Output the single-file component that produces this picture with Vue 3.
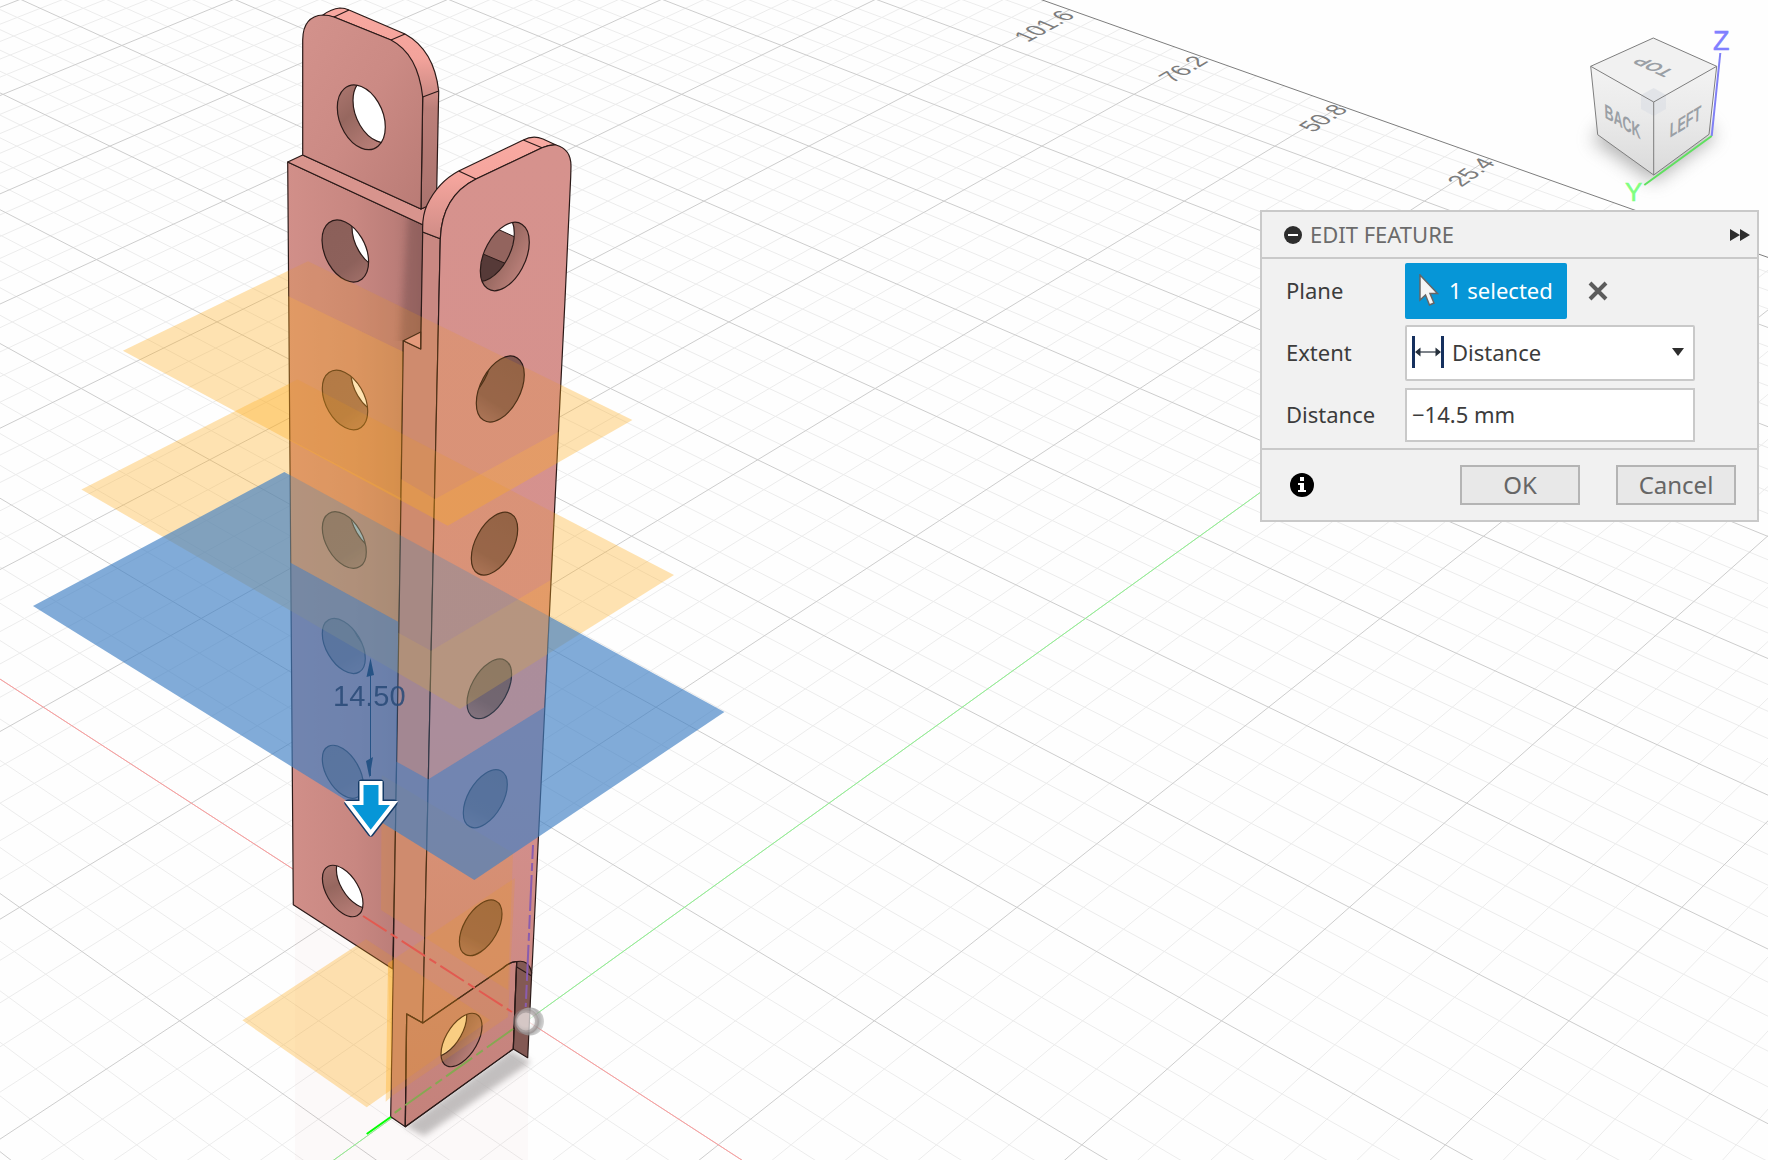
<template>
  <main class="workspace">
    <svg class="viewport" viewBox="0 0 1768 1160" preserveAspectRatio="xMinYMin slice" aria-label="Model viewport">
      <defs>
        <linearGradient id="plate" x1="0" x2="1" y1="0" y2="0">
          <stop offset="0" stop-color="#d18f89" />
          <stop offset="0.5" stop-color="#c88781" />
          <stop offset="0.78" stop-color="#bc7e79" />
          <stop offset="1" stop-color="#a66f6b" />
        </linearGradient>
        <linearGradient id="tab" x1="0" x2="1" y1="0" y2="1">
          <stop offset="0" stop-color="#d3928c" />
          <stop offset="0.5" stop-color="#cb8a84" />
          <stop offset="1" stop-color="#b97b75" />
        </linearGradient>
        <linearGradient id="front" x1="0" x2="0" y1="0" y2="1">
          <stop offset="0" stop-color="#d6928d" />
          <stop offset="0.6" stop-color="#d5918e" />
          <stop offset="1" stop-color="#c9867f" />
        </linearGradient>
        <linearGradient id="rim" x1="0" x2="0" y1="0" y2="1">
          <stop offset="0" stop-color="#f9aaa2" />
          <stop offset="0.4" stop-color="#f5a59d" />
          <stop offset="1" stop-color="#cf8c86" />
        </linearGradient>
        <linearGradient id="tabSide" x1="0" x2="0" y1="0" y2="1">
          <stop offset="0" stop-color="#f8a8a0" />
          <stop offset="0.25" stop-color="#f3a39b" />
          <stop offset="0.42" stop-color="#cf8c86" />
          <stop offset="0.5" stop-color="#bb7f79" />
          <stop offset="1" stop-color="#ab736e" />
        </linearGradient>
        <linearGradient id="deep" x1="0" x2="1" y1="0" y2="1">
          <stop offset="0" stop-color="#8b5f59" />
          <stop offset="0.65" stop-color="#8d615b" />
          <stop offset="1" stop-color="#ab7770" />
        </linearGradient>
        <linearGradient id="deepRight" x1="1" x2="0" y1="0" y2="1">
          <stop offset="0" stop-color="#80564f" />
          <stop offset="0.65" stop-color="#865b54" />
          <stop offset="1" stop-color="#ad7871" />
        </linearGradient>
        <linearGradient id="shallow" x1="0" x2="1" y1="0" y2="1">
          <stop offset="0" stop-color="#b17a73" />
          <stop offset="0.4" stop-color="#96675f" />
          <stop offset="1" stop-color="#c48680" />
        </linearGradient>
        <linearGradient id="cubeSide" x1="0" x2="0" y1="0" y2="1">
          <stop offset="0" stop-color="#f3f3f3" />
          <stop offset="0.5" stop-color="#e9e9e9" />
          <stop offset="1" stop-color="#dadada" />
        </linearGradient>
        <radialGradient id="ball" cx="0.35" cy="0.45" r="0.65">
          <stop offset="0.35" stop-color="#fff" stop-opacity="0.55" />
          <stop offset="0.75" stop-color="#999" stop-opacity="0.75" />
          <stop offset="1" stop-color="#aaa" stop-opacity="0.5" />
        </radialGradient>
        <filter id="soft" x="-30%" y="-30%" width="160%" height="160%">
          <feGaussianBlur stdDeviation="3" />
        </filter>
        <filter id="softer" x="-50%" y="-50%" width="200%" height="200%">
          <feGaussianBlur stdDeviation="9" />
        </filter>
        <clipPath id="plateClip">
          <path d="M287.7 162L423.3 225L420.7 332L403.3 341L288 341Z" />
        </clipPath>
        <clipPath v-for="(hole, i) in holes" :id="`hole${i}`" :key="`hc${i}`">
          <circle r="1" :transform="hole.matrix" />
        </clipPath>
        <clipPath id="openClip">
          <circle r="1" :transform="holes[7].openMatrix" />
        </clipPath>
        <template v-for="(plane, i) in planes" :key="`pc${i}`">
          <clipPath :id="`behind${i}`">
            <path :d="plane.cut" />
          </clipPath>
          <clipPath :id="`ahead${i}`">
            <path :d="`M0 0H1768V1160H0Z ${plane.cut}`" clip-rule="evenodd" />
          </clipPath>
        </template>
      </defs>

      <!-- ground grid -->
      <g>
        <path class="grid-minor" :d="minorGrid" />
        <path class="grid-major" :d="majorGrid" />
        <path class="grid-border" :d="borderLine" />
        <path class="axis-red" :d="redAxis" />
        <path class="axis-green" :d="greenAxis" />
        <text
          v-for="label in gridLabels"
          :key="label.text"
          class="grid-label"
          y="8"
          :transform="`matrix(${label.dx} ${label.dy} 1 0.42 ${label.x} ${label.y})`"
        >{{ label.text }}</text>
      </g>

      <!-- reflection and contact shadow -->
      <path class="reflection" d="M295 905L393 969V1117L405 1127L528 1058V1160H295Z" />
      <path class="shadow" d="M511 1050L531 1062L424 1136L405 1126Z" filter="url(#soft)" />

      <!-- bracket body -->
      <g class="edges">
        <path fill="url(#plate)" d="M287.7 162L423.3 225L420.7 349L403.3 341L400 560L395.3 840L392.7 969L293.3 904.7L290.7 560Z" />
        <g clip-path="url(#plateClip)">
          <path class="crease" d="M430 215L408 215L400 345L430 348Z" filter="url(#soft)" />
        </g>
        <path fill="#d8948d" d="M287.7 162L302.7 155L421 209L428.5 205.5L423.3 225Z" />
        <path fill="url(#tabSide)" d="M323 15Q331 9 340 8Q345 8 349 10L405 34Q434 50 438.7 91L436.7 190L428 206L421 209L422.7 97L391 40L334 17Z" />
        <path fill="url(#tab)" d="M302.7 155V40Q303 16 323 15Q329 15 334 17L391 40Q418 54 422.7 97L421 209Z" />
        <path class="line" d="M334 17L349 10M391 40L405 34M422.7 97L438.7 91" />

        <path fill="#c98882" d="M422.7 232L440.3 238.7L434 520L428.3 780L422.7 1023L406.7 1014L405.3 1126.7L390.7 1116.7L395.3 840L400 560L403.3 340.7L420.7 349Z" />
        <path fill="#e29a93" d="M403.3 340.7L420.7 332V349Z" />
        <path fill="url(#rim)" d="M422.7 232Q422 216 427 205Q438 182 458.7 171L523.3 140Q533 135 543 139L556 145Q550 144.5 542 147.7L476 179Q442 196 440.3 238.7Z" />
        <path fill="url(#front)" d="M440.3 238.7Q442 196 476 179L542 147.7Q550 144.5 556 145Q571 149 571 166L570.7 177L565 300L554.7 507L538.3 840L532.3 963L531.7 973L516.7 962L513.3 1049L405.3 1126.7L406.7 1014L422.7 1023L428.3 780L434 520Z" />
        <path class="line" d="M458.7 171L476 179M523.3 140L542 147.7" />
        <path fill="#835954" d="M516.7 961.7Q529 959 531.7 973L527.7 1057.7L513.3 1049Z" />
        <path class="line" d="M422.7 1023L503 968Q511 961 516.7 961.7M516.7 967L531.7 976" />
        <path class="lower" d="M406.7 1014L422.7 1023L503 968Q511 961 516.7 961.7L513.3 1049L405.3 1126.7Z" />
      </g>

      <!-- drilled holes -->
      <g v-for="(hole, i) in holes" :key="i">
        <circle r="1" :transform="hole.matrix" :fill="`url(#${hole.shade})`" />
        <g v-if="hole.open" :clip-path="`url(#hole${i})`">
          <circle r="1" :transform="hole.openMatrix" :fill="hole.fill" />
          <g v-if="hole.nested" clip-path="url(#openClip)">
            <path class="nested-mid" d="M492 226.5L516 237.5V272L470 249V226Z" />
            <path class="nested-low" d="M470 248.5L508 264.5V292H470Z" />
          </g>
          <circle class="hole-edge" r="1" :transform="hole.openMatrix" fill="none" />
        </g>
        <circle class="hole-edge" r="1" :transform="hole.matrix" fill="none" />
      </g>

      <!-- construction planes: light tint where the body is in front of them -->
      <path class="plane orange faint" d="M381.7 775L513 853L508 990L381 910Z" />
      <path class="plane orange faint" d="M388 963L515 878L508 1017L392 1096Z" />
      <path class="plane orange" d="M388 963L393 960L391 1097L385.7 1101.7Z" />
      <g v-for="(plane, i) in planes" :key="`p${i}`">
        <path :class="['plane', plane.kind, 'faint']" :d="plane.shape" :clip-path="`url(#behind${i})`" />
        <path :class="['plane', plane.kind]" :d="plane.shape" :clip-path="`url(#ahead${i})`" />
      </g>

      <!-- axes seen through the body -->
      <path class="hidden-red" d="M363 916L512 1012" />
      <path class="hidden-blue" d="M533 845L525.7 1007" />
      <path class="hidden-green" d="M513 1029L393 1114" />
      <path class="near-green" d="M390.7 1117L366.7 1134" />
      <circle cx="530" cy="1021.5" r="14" fill="url(#ball)" />
      <circle class="ball-ring" cx="526" cy="1021.5" r="11" />

      <!-- dimension manipulator -->
      <g class="dimension">
        <path class="dim-line" d="M370.5 660V776" />
        <path d="M370.5 658L366.5 677L374 675ZM369.5 778L366 761L373 757Z" />
        <text x="333" y="706">14.50</text>
      </g>
      <path class="arrow-outer" d="M361.5 783H380.5V803H394L370.7 833L348 803H361.5Z" />
      <path class="arrow-inner" d="M361.5 783H380.5V803H394L370.7 833L348 803H361.5Z" />

      <!-- view cube -->
      <g>
        <path class="cube-shadow" d="M1592 140L1654 182L1716 136L1700 120H1610Z" filter="url(#softer)" />
        <path class="cube-face" fill="#f1f1f1" d="M1653.3 38L1590.7 66.3L1653.7 102L1716.7 66.3Z" />
        <path class="cube-face" fill="url(#cubeSide)" d="M1590.7 66.3L1653.7 102V175L1597.7 134.7Z" />
        <path class="cube-face" fill="url(#cubeSide)" d="M1716.7 66.3L1653.7 102V175L1709 134.3Z" />
        <path class="cube-corner" d="M1653.7 88L1666 95V109L1653.7 116L1641 109V95Z" />
        <path class="cube-edge" d="M1653.3 38L1590.7 66.3L1597.7 134.7L1653.7 175L1709 134.3L1716.7 66.3ZM1590.7 66.3L1653.7 102L1716.7 66.3M1653.7 102V175" />
        <text class="cube-text" y="7" transform="matrix(-0.84 -0.38 0.85 -0.46 1653 67)">TOP</text>
        <text class="cube-text" y="7" transform="matrix(0.66 0.4 0.04 1.08 1622.500 121)">BACK</text>
        <text class="cube-text" y="7" transform="matrix(0.66 -0.4 -0.04 1.08 1685.500 121)">LEFT</text>
        <path class="cube-z" d="M1720.3 53L1711.7 136" />
        <path class="cube-y" d="M1711.7 136L1644.3 185" />
        <text class="axis-name z" x="1713" y="50">Z</text>
        <text class="axis-name y" x="1625" y="201">Y</text>
      </g>
    </svg>

    <form class="panel" @submit.prevent>
      <header class="panel-header">
        <button type="button" class="plain" aria-label="Collapse">
          <svg width="18" height="18" viewBox="0 0 18 18">
            <circle cx="9" cy="9" r="9" fill="#2d2d2d" />
            <path d="M4 9H14" stroke="#fff" stroke-width="2" />
          </svg>
        </button>
        <h1>EDIT FEATURE</h1>
        <button type="button" class="plain" aria-label="Expand">
          <svg width="20" height="12" viewBox="0 0 20 12">
            <path d="M0 0L10 6L0 12ZM10 0L20 6L10 12Z" fill="#2d2d2d" />
          </svg>
        </button>
      </header>

      <div class="panel-body">
        <div class="row">
          <label for="plane">Plane</label>
          <button id="plane" type="button" class="picker">
            <svg width="20" height="32" viewBox="0 0 20 32">
              <path d="M1 1V26L6.500 21L10.500 31L15 29L11 19.500H18.500Z" fill="#f5f5f5" stroke="#666" stroke-width="1.500" />
            </svg>
            <span>1 selected</span>
          </button>
          <button type="button" class="plain clear" aria-label="Clear selection">
            <svg width="20" height="20" viewBox="0 0 20 20">
              <path d="M2 2L18 18M18 2L2 18" stroke="#5c5c5c" stroke-width="4" />
            </svg>
          </button>
        </div>
        <div class="row">
          <label for="extent">Extent</label>
          <div class="select-wrap">
            <svg class="extent-icon" width="32" height="32" viewBox="0 0 32 32">
              <path d="M1.500 0V32M30.500 0V32" stroke="#15305e" stroke-width="3" />
              <path d="M4 16H28" stroke="#26303c" stroke-width="1.200" />
              <path d="M3 16L8.500 11.500V20.500ZM29 16L23.500 11.500V20.500Z" fill="#26303c" />
            </svg>
            <select id="extent" v-model="extent">
              <option>Distance</option>
              <option>To Object</option>
            </select>
            <svg class="caret" width="12" height="8" viewBox="0 0 12 8">
              <path d="M0 0H12L6 8Z" fill="#2d2d2d" />
            </svg>
          </div>
        </div>
        <div class="row">
          <label for="distance">Distance</label>
          <input id="distance" v-model="distance" type="text" />
        </div>
      </div>

      <footer class="panel-footer">
        <button type="button" class="plain info" aria-label="Info">
          <svg width="24" height="24" viewBox="0 0 24 24">
            <circle cx="12" cy="12" r="12" fill="#000" />
            <path d="M10 4H14V8H10ZM8 10H14V17H16V19H8V17H10V12H8Z" fill="#fff" />
          </svg>
        </button>
        <button type="submit" class="action">OK</button>
        <button type="button" class="action">Cancel</button>
      </footer>
    </form>
  </main>
</template>

<script setup>
import { ref } from 'vue'

const extent = ref('Distance')
const distance = ref('−14.5 mm')

// Ground plane to screen. a runs along the green axis, b along the red one.
function project(a, b) {
  const w = 1 + 0.0446 * (a - b)
  const x = (527 + 188 * a + 159.3 * b) / w
  const y = (1020.8 - 73 * (a - b)) / w
  return `${x.toFixed(1)} ${y.toFixed(1)}`
}

function segment(a1, b1, a2, b2) {
  return `M${project(a1, b1)}L${project(a2, b2)}`
}

const far = 9.77
const near = -4
const left = -13
const right = 6

const major = []
const minor = []
for (let i = near * 5; i / 5 < far; i++) {
  const line = segment(i / 5, left, i / 5, right)
  if (i % 5 === 0) major.push(line)
  else minor.push(line)
}
for (let i = left * 5; i <= right * 5; i++) {
  const line = segment(near, i / 5, far, i / 5)
  if (i % 5 === 0) major.push(line)
  else minor.push(line)
}
const majorGrid = major.join('')
const minorGrid = minor.join('')
const borderLine = segment(far, left, far, right)
const redAxis = segment(0, left, 0, right)
const greenAxis = segment(near, 0, far, 0)

const gridLabels = [
  { text: '101.6', x: 1044, y: 26, dx: 0.84, dy: -0.46 },
  { text: '76.2', x: 1183, y: 69, dx: 0.82, dy: -0.49 },
  { text: '50.8', x: 1323, y: 118, dx: 0.8, dy: -0.51 },
  { text: '25.4', x: 1471, y: 172, dx: 0.78, dy: -0.54 },
]

// [cx, cy, half width, half height, lean, fill shade, opening offset, opening colour]
const holeData = [
  [361.3, 117.3, 24, 32.3, 0.3, 'shallow', [15.7, -7], '#fff'],
  [345.3, 251, 23.3, 31, 0.35, 'deep', [30, -13], '#fff'],
  [345, 400, 22.7, 29.7, 0.38, 'deep', [28.7, -16], '#fff'],
  [344.3, 540, 22, 28.3, 0.42, 'deep', [28, -17], '#a5d4f5'],
  [343.8, 646, 21.5, 27.5, 0.45, 'deep', [28.7, -18.3], '#a5d4f5'],
  [342.8, 771.8, 20.5, 26.5, 0.48, 'deep', null, ''],
  [342.7, 891, 20.3, 25.7, 0.49, 'shallow', [14, -8.7], '#fff'],
  [504.8, 256.5, 24.5, 34.2, -0.42, 'shallow', [-15, -9], '#fff'],
  [500.3, 389, 24, 33, -0.43, 'deepRight', [-33, -20], '#6b4842'],
  [494.5, 543.7, 23.2, 31.4, -0.46, 'deepRight', null, ''],
  [489.3, 688.8, 22.3, 29.8, -0.48, 'deepRight', null, ''],
  [485.3, 798.7, 22, 29, -0.49, 'deepRight', null, ''],
  [480.7, 927.8, 21.3, 27.8, -0.5, 'deepRight', null, ''],
  [461.5, 1040, 20.5, 26.7, -0.52, 'shallow', [-15.3, -10], '#ffe6b8'],
]

function ellipse(cx, cy, hw, hh, lean) {
  return `matrix(${hw} ${hh * lean} 0 ${hh * Math.sqrt(1 - lean * lean)} ${cx} ${cy})`
}

const holes = holeData.map(([cx, cy, hw, hh, lean, shade, open, fill], i) => ({
  matrix: ellipse(cx, cy, hw, hh, lean),
  openMatrix: open ? ellipse(cx + open[0], cy + open[1], hw, hh, lean) : '',
  open: !!open,
  nested: i === 7,
  shade,
  fill,
}))

const planes = [
  {
    kind: 'orange',
    shape: 'M242.4 1020.3L366 939.3L490 1020L366.7 1107.3Z',
    cut: 'M293 900V904.7L392.7 969L390.7 1117H600V900Z',
  },
  {
    kind: 'orange',
    shape: 'M122.9 350.7L308 261.2L632.4 420L447.7 525.7Z',
    cut: 'M288 200V296L403.3 351.7L401 479L435 499L558.5 431.7L568 200Z',
  },
  {
    kind: 'orange',
    shape: 'M81.4 489.5L297.5 379.5L674 575L460 709Z',
    cut: 'M289 300V439L401 498L398.3 632.7L431 650.7L550.7 580L562 300Z',
  },
  {
    kind: 'blue',
    shape: 'M33 606L284.3 472L724.4 712L474.3 880Z',
    cut: 'M290 400L290.7 562.7L398.3 621.7L396.7 761.7L428.3 779.3L544.3 707.3L560 400Z',
  },
]
</script>

<style>
body {
  margin: 0;
}
</style>

<style scoped>
.workspace {
  position: relative;
  min-height: 100vh;
  overflow: hidden;
  background: #fefefe;
  font-family: "Noto Sans", "Open Sans", sans-serif;
  font-size: 22px;
  color: #3c3c3c;
}

.viewport {
  display: block;
  width: 100%;
  height: 100vh;
}

.viewport path {
  fill-rule: evenodd;
}

.grid-minor,
.grid-major,
.grid-border,
.axis-red,
.axis-green {
  fill: none;
  stroke-width: 1;
}

.grid-minor { stroke: #ececec; }
.grid-major { stroke: #cdcdcd; }
.grid-border { stroke: #7d7d7d; }
.axis-red { stroke: #ff9c9c; }
.axis-green { stroke: #8ff58f; }

.grid-label {
  font-family: "Liberation Sans", Arial, sans-serif;
  font-size: 23px;
  fill: #7c7c7c;
  text-anchor: middle;
}

.reflection {
  fill: #c87878;
  opacity: 0.04;
}

.shadow {
  fill: #b4b0b0;
  opacity: 0.8;
}

.edges path {
  stroke: #2b1a18;
  stroke-width: 1.2;
  stroke-linejoin: round;
}

.edges .line {
  fill: none;
}

.edges .crease {
  fill: #6b4646;
  opacity: 0.35;
  stroke: none;
}

.edges .lower {
  fill: #a86b66;
  fill-opacity: 0.12;
}

.hole-edge {
  stroke: #2b1a18;
  stroke-width: 1.2;
  vector-effect: non-scaling-stroke;
}

.nested-mid { fill: #93645e; stroke: #2b1a18; }
.nested-low { fill: #563a38; stroke: #2b1a18; }

.plane { stroke: none; }
.orange { fill: rgba(255, 174, 35, 0.35); }
.orange.faint { fill: rgba(240, 155, 20, 0.18); }
.blue { fill: rgba(64, 128, 196, 0.66); }
.blue.faint { fill: rgba(64, 132, 192, 0.28); }

.hidden-red,
.hidden-blue,
.hidden-green,
.near-green {
  fill: none;
  stroke-width: 2;
}

.hidden-red {
  stroke: #e25a50;
  stroke-dasharray: 28 5 8 5;
}

.hidden-blue {
  stroke: #8a5cae;
  stroke-dasharray: 14 4 8 4 36 4;
}

.hidden-green {
  stroke: #86a852;
  stroke-dasharray: 32 5 8 5;
}

.near-green { stroke: #0f0; }

.ball-ring {
  fill: #fff;
  fill-opacity: 0.25;
  stroke: #8f8585;
  stroke-opacity: 0.5;
  stroke-width: 4;
}

.dimension {
  fill: #1d4d80;
  opacity: 0.88;
}

.dimension text {
  font-family: "Liberation Sans", Arial, sans-serif;
  font-size: 29px;
  fill: #2a4b78;
}

.dim-line { stroke: #1d4d80; }

.arrow-outer {
  fill: none;
  stroke: #143a66;
  stroke-width: 7;
  stroke-linejoin: round;
}

.arrow-inner {
  fill: #0696d7;
  stroke: #fff;
  stroke-width: 4;
}

.cube-shadow {
  fill: #777;
  opacity: 0.55;
}

.cube-edge {
  fill: none;
  stroke: #7e7e7e;
}

.cube-corner {
  fill: #dfe1e6;
  opacity: 0.8;
}

.cube-text {
  font-family: "Liberation Sans Narrow", "Liberation Sans", Arial, sans-serif;
  font-size: 19px;
  font-weight: bold;
  fill: #9a9fa5;
  text-anchor: middle;
}

.cube-z,
.cube-y {
  fill: none;
  stroke: #8080f5;
  stroke-width: 2;
}

.cube-y { stroke: #5fe05f; }

.axis-name {
  font-family: "Liberation Sans", Arial, sans-serif;
  font-size: 27px;
  stroke-width: 0.5;
}

.axis-name.z { fill: #8080ff; stroke: #8080ff; }
.axis-name.y { font-size: 26px; fill: #80ff80; stroke: #80ff80; }

/* dialog */
.panel {
  position: absolute;
  top: 210px;
  right: 9px;
  box-sizing: border-box;
  width: 499px;
  max-width: calc(100% - 18px);
  border: 2px solid #c9c9c9;
  background: #f1f1f1;
}

.panel button,
.panel select,
.panel input {
  font: inherit;
}

.plain {
  display: flex;
  padding: 0;
  border: 0;
  background: none;
}

.panel-header {
  display: flex;
  align-items: center;
  gap: 8px;
  height: 45px;
  padding: 0 7px 0 22px;
  border-bottom: 2px solid #c9c9c9;
}

.panel-header h1 {
  flex: 1;
  margin: 0;
  padding-bottom: 2px;
  font-size: 22px;
  font-weight: 400;
  color: #6b6b6b;
}

.panel-body {
  display: flex;
  flex-direction: column;
  gap: 6px;
  padding: 4px 62px 5px 24px;
}

.row {
  display: flex;
  align-items: center;
  height: 56px;
}

.row label {
  flex: 0 0 119px;
  padding-bottom: 2px;
}

.panel .picker {
  display: flex;
  align-items: center;
  gap: 10px;
  height: 56px;
  width: 162px;
  padding: 0 0 2px 14px;
  border: 0;
  border-radius: 2px;
  background: #0696d7;
  color: #fff;
  white-space: nowrap;
}

.clear {
  margin-left: 21px;
}

.select-wrap {
  position: relative;
  flex: 1;
  height: 56px;
}

.select-wrap select {
  width: 100%;
  height: 56px;
  padding: 0 0 2px 45px;
  border: 2px solid #c9c9c9;
  border-radius: 2px;
  background: #fff;
  color: inherit;
  appearance: none;
}

.extent-icon {
  position: absolute;
  top: 11px;
  left: 7px;
  pointer-events: none;
}

.caret {
  position: absolute;
  top: 23px;
  right: 11px;
  pointer-events: none;
}

.row input {
  box-sizing: border-box;
  flex: 1;
  min-width: 0;
  height: 54px;
  padding: 0 5px 2px;
  border: 2px solid #c9c9c9;
  background: #fff;
  color: inherit;
}

.panel-footer {
  display: flex;
  align-items: center;
  gap: 36px;
  height: 70px;
  padding: 0 21px 0 28px;
  border-top: 2px solid #c9c9c9;
}

.info {
  margin-right: auto;
}

.panel .action {
  width: 120px;
  height: 40px;
  padding: 0;
  border: 2px solid #b4b4b4;
  background: #e8e8e8;
  color: #666;
  font-size: 24px;
  line-height: 34px;
}
</style>
